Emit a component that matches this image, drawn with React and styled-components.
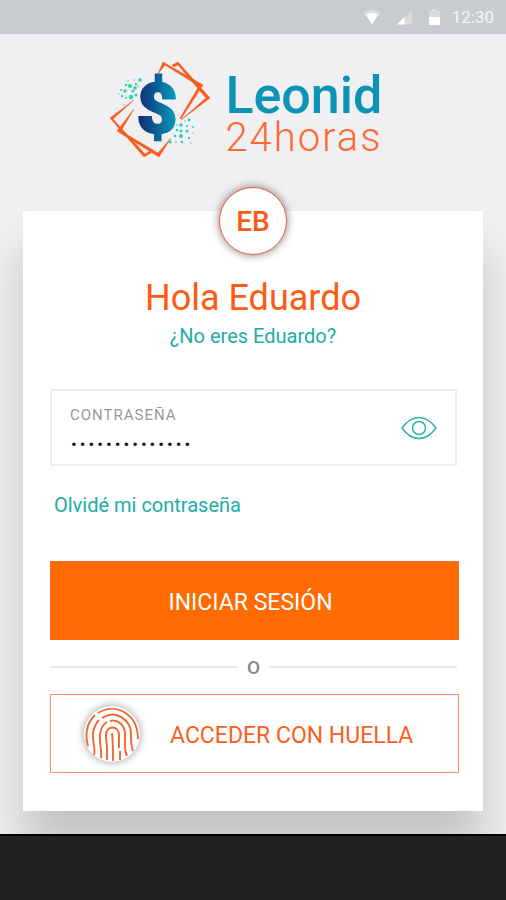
import { useState } from 'react'
import styled, { createGlobalStyle } from 'styled-components'

const GlobalStyle = createGlobalStyle`
    * {
        box-sizing: border-box;
    }
    body {
        margin: 0;
        background-color: #222;
        font-family: Roboto, "Liberation Sans", sans-serif;
    }
    button, input {
        font-family: inherit;
    }
`
const Screen = styled.div`
    display: flex;
    flex-direction: column;
    min-height: 100vh;
`
const StatusBar = styled.div`
    display: flex;
    align-items: center;
    justify-content: flex-end;
    gap: 12px;
    height: 34px;
    padding: 0 12px;
    background-color: #c9cccf;
    color: #f4f5f6;
    font-size: 17px;
`
const StatusIcons = styled.div`
    display: flex;
    align-items: center;
    gap: 17px;
    svg {
        display: block;
    }
`
const Page = styled.main`
    overflow: hidden;
    padding: 26px 23px 23px;
    background-color: #f0f0f2;
`
const Brand = styled.header`
    display: flex;
    justify-content: center;
    gap: 14px;
    height: 151px;
    padding-right: 14px;
`
const BrandText = styled.div`
    padding-top: 10px;
`
const BrandName = styled.div`
    color: #0d93b5;
    font-size: 52px;
    font-weight: 500;
    line-height: 52px;
`
const BrandSub = styled.div`
    color: #fb6a35;
    font-size: 40px;
    font-weight: 300;
    line-height: 32px;
    letter-spacing: 2px;
`
const Card = styled.section`
    padding: 0 24px 38px 27px;
    background-color: #fff;
    box-shadow: 0 40px 44px rgba(0, 0, 0, .19);
`
const CardHead = styled.div`
    display: flex;
    flex-direction: column;
    align-items: center;
    padding-right: 3px;
`
const Avatar = styled.div`
    display: flex;
    align-items: center;
    justify-content: center;
    width: 68px;
    height: 68px;
    margin-top: -24px;
    border: 1px solid #f0623a;
    border-radius: 50%;
    background-color: #fff;
    box-shadow: 0 0 8px rgba(0, 0, 0, .5);
    color: #fa5a14;
    font-size: 28px;
    font-weight: 500;
`
const Title = styled.h1`
    margin: 21px 0 0;
    color: #ff5a14;
    font-size: 36px;
    font-weight: 400;
    line-height: 44px;
`
const Link = styled.a`
    color: #21ada5;
    font-size: 20px;
    font-weight: 400;
    line-height: 32px;
    text-decoration: none;
`
const Form = styled.form`
    display: flex;
    flex-direction: column;
    align-items: stretch;
    margin-top: 37px;
`
const Field = styled.div`
    display: flex;
    align-items: center;
    justify-content: space-between;
    height: 77px;
    margin-right: 2px;
    padding: 0 18px;
    border: 2px solid #eee;
`
const FieldBody = styled.div`
    flex: 1;
    display: flex;
    flex-direction: column;
    padding-top: 13px;
`
const Label = styled.label`
    color: #999;
    font-size: 15px;
    line-height: 20px;
    letter-spacing: 1px;
`
const Input = styled.input`
    width: 100%;
    height: 38px;
    padding: 0 0 0 1px;
    border: 0;
    outline: 0;
    background: none;
    color: #111;
    font-size: 17px;
    letter-spacing: 3px;
`
const IconButton = styled.button`
    padding: 0;
    border: 0;
    background: none;
    cursor: pointer;
    svg {
        display: block;
    }
`
const Forgot = styled.div`
    padding: 23px 4px 40px;
`
const Button = styled.button`
    display: flex;
    align-items: center;
    justify-content: ${props => props.$outline ? 'flex-start' : 'center'};
    gap: 30px;
    height: 79px;
    padding: ${props => props.$outline ? '0 0 0 33px' : '0 8px 0 0'};
    border: 1px solid ${props => props.$outline ? '#fb8a70' : '#ff6a2a'};
    background-color: ${props => props.$outline ? '#fff' : '#ff6b00'};
    color: ${props => props.$outline ? '#fa5f1e' : '#fff'};
    font-size: 23px;
    cursor: pointer;
`
const ButtonText = styled.span`
    padding-top: 4px;
`
const Divider = styled.div`
    display: flex;
    align-items: center;
    gap: 9px;
    height: 54px;
    padding-right: 2px;
    color: #888;
    font-size: 19px;
    font-weight: 500;
    &::before, &::after {
        content: '';
        flex: 1;
        height: 2px;
        background-color: #e9e9e9;
    }
`
const Finger = styled.span`
    width: 56px;
    height: 56px;
    border-radius: 50%;
    background-color: #fff;
    box-shadow: 0 0 8px rgba(0, 0, 0, .4);
    svg {
        display: block;
    }
`
const BottomBar = styled.div`
    flex: 1;
    min-height: 66px;
    border-top: 2px solid #000;
    background-color: #222;
`

const dots = [
    [31, 20, 1.8], [27, 24, 1.2], [21, 26, 2], [24, 31, 1.6], [17, 25, 1.3], [22, 37, 2.2],
    [16, 31, 1.7], [12, 30, 1], [26, 28, 1.8], [13, 36, 1.2], [17, 38, 1], [29, 26, .8],
    [10, 34, .7], [15, 45, .8], [25, 20, .7], [27, 35, 1.5], [19, 21, .7],
    [80, 60, 1.4], [72, 65, 1.8], [78, 66, 1], [68, 70, 1.2], [72, 76, 2], [78, 71, 1.5],
    [66, 76, 1.3], [84, 67, 1], [80, 78, 1.2], [72, 71, 1.5], [61, 82, 1.6], [73, 82, 1.2],
    [67, 82, .8], [84, 73, .7], [68, 65, .8], [76, 61, .8], [82, 83, .7]
]

const Logo = () => (
    <svg width="102" height="100" viewBox="0 0 102 100" aria-hidden="true">
        <defs>
            <linearGradient id="dollar" x1="0" y1="0" x2="1" y2="0">
                <stop offset="0" stopColor="#14286a" />
                <stop offset=".45" stopColor="#0b5b94" />
                <stop offset="1" stopColor="#0aa0bd" />
            </linearGradient>
        </defs>
        <g fill="#f75b1d" stroke="#f75b1d" strokeWidth=".5" strokeLinejoin="round">
            <path d="M63 5 69 2 101 38 72 60 97 38 69 5 65 7Z" />
            <path d="M49 14 54 2 94 25 72 59 71 58 90 26 56 5Z" />
            <path d="M25 40 1 58 35 97 42 93 41 91 36 94 4 59Z" />
            <path d="M25 49 8 71 50 97 62 78 49 93 12 71Z" />
        </g>
        <g fill="#2fd0b0">
            {dots.map(([x, y, r]) => <circle key={`${x}-${y}`} cx={x} cy={y} r={r} />)}
        </g>
        <text
            x="48"
            y="73"
            textAnchor="middle"
            fontFamily="Roboto"
            fontSize="71"
            fontWeight="900"
            fill="url(#dollar)"
            stroke="url(#dollar)"
            strokeWidth="2"
        >
            $
        </text>
    </svg>
)

const Eye = () => (
    <svg width="36" height="24" viewBox="0 0 36 24" fill="none" stroke="#2bb3aa" strokeWidth="1.500">
        <path d="M1 12C6 5 11 1.500 18 1.500S30 5 35 12C30 19 25 22.500 18 22.500S6 19 1 12Z" />
        <circle cx="18" cy="12" r="6.500" />
    </svg>
)

const Fingerprint = () => (
    <svg width="56" height="56" viewBox="0 0 56 56" fill="none" stroke="#f4662e" strokeWidth="1.900">
        <path d="M4 40C0 26 4 16 11 9" />
        <path d="M14 7C32-4 54 8 54 33" />
        <path d="M10 49C12 42 8 36 9 27C10 21 12 17 15 14" />
        <path d="M18 12C32 3 47 14 47 28V34C47 39 48 41 49 45" />
        <path d="M17 52C18 44 15 36 16 28C17 22 19 18 23 16" />
        <path d="M26 15C35 13 41 20 41 28V40C41 44 42 48 43 50" />
        <path d="M23 54V44C23 38 22 34 22 29C22 19 35 19 35 29V42" />
        <path d="M36 45V54" />
        <path d="M28 27C29 36 29 44 29 55" />
    </svg>
)

const App = () => {
    const [password, setPassword] = useState('contrasena2024')
    const [visible, setVisible] = useState(false)

    return (
        <Screen>
            <GlobalStyle />
            <StatusBar>
                <StatusIcons>
                    <svg width="16" height="14" viewBox="0 0 16 14" fill="#fff">
                        <path d="M0 3Q8-3 16 3L8 14Z" opacity=".4" />
                        <path d="M2 5Q8 1 14 5L8 14Z" />
                    </svg>
                    <svg width="15" height="15" viewBox="0 0 16 15" fill="#fff">
                        <path d="M0 15 16 0V15Z" opacity=".3" />
                        <path d="M0 15 8 7V15Z" />
                    </svg>
                    <svg width="11" height="16" viewBox="0 0 11 16" fill="#fff">
                        <path d="M0 2H3V0H8V2H11V8H0Z" opacity=".3" />
                        <path d="M0 8H11V16H0Z" />
                    </svg>
                </StatusIcons>
                <span>12:30</span>
            </StatusBar>
            <Page>
                <Brand>
                    <Logo />
                    <BrandText>
                        <BrandName>Leonid</BrandName>
                        <BrandSub>24horas</BrandSub>
                    </BrandText>
                </Brand>
                <Card>
                    <CardHead>
                        <Avatar>EB</Avatar>
                        <Title>Hola Eduardo</Title>
                        <Link href="#">¿No eres Eduardo?</Link>
                    </CardHead>
                    <Form onSubmit={e => e.preventDefault()}>
                        <Field>
                            <FieldBody>
                                <Label htmlFor="password">CONTRASEÑA</Label>
                                <Input
                                    id="password"
                                    type={visible ? 'text' : 'password'}
                                    value={password}
                                    onChange={e => setPassword(e.target.value)}
                                />
                            </FieldBody>
                            <IconButton type="button" aria-label="Mostrar contraseña" onClick={() => setVisible(!visible)}>
                                <Eye />
                            </IconButton>
                        </Field>
                        <Forgot>
                            <Link href="#">Olvidé mi contraseña</Link>
                        </Forgot>
                        <Button type="submit">
                            <ButtonText>INICIAR SESIÓN</ButtonText>
                        </Button>
                        <Divider>O</Divider>
                        <Button type="button" $outline>
                            <Finger><Fingerprint /></Finger>
                            <ButtonText>ACCEDER CON HUELLA</ButtonText>
                        </Button>
                    </Form>
                </Card>
            </Page>
            <BottomBar />
        </Screen>
    )
}

export default App
